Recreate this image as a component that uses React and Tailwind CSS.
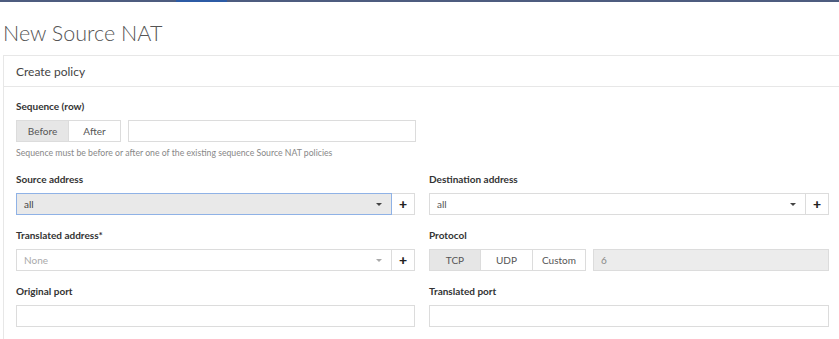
function Label({ children }) {
  return <div className="mb-[7px] h-[13px] text-[10px] font-bold leading-[13px] text-[#333]">{children}</div>;
}

function Caret({ light }) {
  return (
    <svg width="6" height="3" viewBox="0 0 6 3" className="shrink-0">
      <path d="M0 0h6L3 3z" fill={light ? '#aaa' : '#444'} />
    </svg>
  );
}

function SelectAdd({ value, placeholder, focused }) {
  return (
    <div className="flex h-[22px]">
      <div
        className={`flex flex-1 items-center justify-between border px-[7px] text-[10px] ${
          focused ? 'border-[#8fb2e6] bg-[#e9e9e9] text-[#444]' : 'border-[#dcdcdc] bg-white text-[#555]'
        }`}
      >
        <span className={placeholder ? 'text-[#aaa]' : ''}>{value}</span>
        <span className="mr-[2px]"><Caret light={placeholder} /></span>
      </div>
      <button className="flex w-[23px] items-center justify-center border border-l-0 border-[#dcdcdc] bg-white text-[14px] font-black leading-none text-[#222]">
        +
      </button>
    </div>
  );
}

function Segmented({ items, active, widths }) {
  return (
    <div className="flex h-[22px] text-[10px] text-[#555]">
      {items.map((it, i) => (
        <div
          key={it}
          style={{ width: widths[i] }}
          className={`flex items-center justify-center border border-[#dcdcdc] ${i > 0 ? 'border-l-0' : ''} ${
            i === active ? 'bg-[#e6e6e6]' : 'bg-white'
          }`}
        >
          {it}
        </div>
      ))}
    </div>
  );
}

export default function App() {
  return (
    <div className="h-[339px] w-[839px] overflow-hidden bg-white font-['Lato',sans-serif]">
      <div className="flex h-[2px] bg-[#4d5c7f]">
        <div className="ml-[176px] w-[51px] bg-[#2c5ba5]" />
      </div>
      <h1 className="ml-[3px] mt-[16px] h-[37px] text-[21.5px] font-light leading-[30px] text-[#555]">New Source NAT</h1>
      <div className="ml-[3px] mr-[-4px] border border-b-0 border-[#e7e7e7] pb-[20px]">
        <div className="flex h-[31px] items-center border-b border-[#e7e7e7] px-[12px] pt-[2px] text-[12px] text-[#444]">
          Create policy
        </div>
        <div className="pl-[12px] pr-[10px] pt-[13px]">
          <Label>Sequence (row)</Label>
          <div className="flex gap-[7px]">
            <Segmented items={['Before', 'After']} active={0} widths={[53, 52]} />
            <div className="h-[22px] w-[288px] border border-[#dcdcdc] bg-white" />
          </div>
          <div className="mt-[5px] h-[12px] text-[8.7px] leading-[12px] text-[#888]">
            Sequence must be before or after one of the existing sequence Source NAT policies
          </div>
          <div className="mt-[14px] grid grid-cols-[399px_400px] gap-x-[14px] gap-y-[14px]">
            <div>
              <Label>Source address</Label>
              <SelectAdd value="all" focused />
            </div>
            <div>
              <Label>Destination address</Label>
              <SelectAdd value="all" />
            </div>
            <div>
              <Label>Translated address*</Label>
              <SelectAdd value="None" placeholder />
            </div>
            <div>
              <Label>Protocol</Label>
              <div className="flex gap-[7px]">
                <Segmented items={['TCP', 'UDP', 'Custom']} active={0} widths={[52, 52, 53]} />
                <div className="flex h-[22px] flex-1 items-center border border-[#dcdcdc] bg-[#ececec] px-[7px] text-[10px] text-[#888]">
                  6
                </div>
              </div>
            </div>
            <div>
              <Label>Original port</Label>
              <div className="h-[22px] border border-[#dcdcdc] bg-white" />
            </div>
            <div>
              <Label>Translated port</Label>
              <div className="h-[22px] border border-[#dcdcdc] bg-white" />
            </div>
          </div>
        </div>
      </div>
    </div>
  );
}
